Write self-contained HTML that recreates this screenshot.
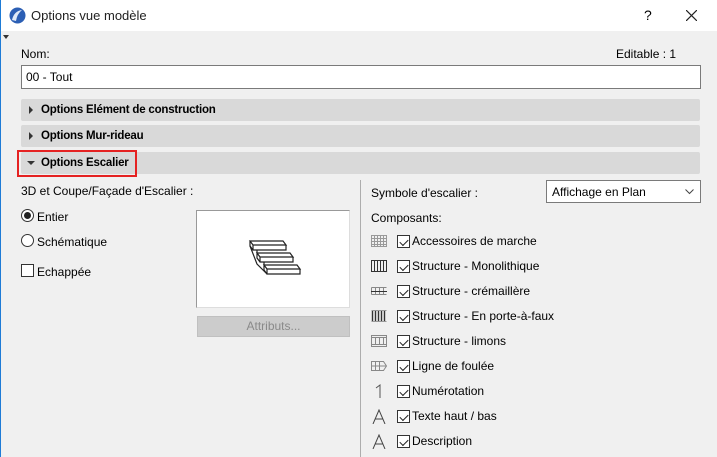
<!DOCTYPE html>
<html><head><meta charset="utf-8"><style>
*{box-sizing:border-box;margin:0;padding:0}
body{width:717px;height:457px;overflow:hidden;background:#f0f0f0;font-family:"Liberation Sans",sans-serif;font-size:12px;color:#000;position:relative}
.a{position:absolute}
.title{left:0;top:0;width:717px;height:31px;background:#fff}
.bar{left:21px;width:679px;height:22px;background:#d9d9d9;border-radius:2px;font-weight:bold;padding-left:20px;line-height:22px;font-size:11.5px;letter-spacing:-0.2px}
.tri{position:absolute;left:8px;top:7px;width:0;height:0;border-top:4px solid transparent;border-bottom:4px solid transparent;border-left:4px solid #333}
.tri.d{left:6px;top:9px;border-left:4px solid transparent;border-right:4px solid transparent;border-top:4px solid #333;border-bottom:0}
.cb{width:13px;height:13px;border:1px solid #333;background:#fff}
.row{left:371px;height:20px}
.row svg{position:absolute;left:0;top:3px}
.row .cb{position:absolute;left:26px;top:3px}
.row span{position:absolute;left:41px;top:2px;white-space:nowrap}
.row .cb::after{content:"";position:absolute;left:2px;top:1px;width:7px;height:4px;border-left:1.3px solid #222;border-bottom:1.3px solid #222;transform:translate(0,2px) rotate(-45deg)}
</style></head><body>
<div class="a" style="left:0;top:0;width:1px;height:457px;background:#1e7bd6;z-index:3"></div>
<div class="a title"></div>
<svg class="a" style="left:9px;top:7px" width="17" height="17" viewBox="0 0 17 17"><circle cx="8.5" cy="8.5" r="8" fill="#2c5fb4"/><path d="M3 13 Q5 4 13 3 Q8 7 7 14Z" fill="#dfe9f7"/></svg>
<div class="a" style="left:31px;top:8px;font-size:13px;color:#222">Options vue modèle</div>
<div class="a" style="left:644px;top:7px;font-size:14px">?</div>
<svg class="a" style="left:686px;top:10px" width="11" height="11"><path d="M0 0L11 11M11 0L0 11" stroke="#222" stroke-width="1.2"/></svg>
<div class="a" style="left:3px;top:35px;border-left:3px solid transparent;border-right:3px solid transparent;border-top:4px solid #333"></div>
<div class="a" style="left:21px;top:47px">Nom:</div>
<div class="a" style="left:616px;top:47px">Editable : 1</div>
<div class="a" style="left:21px;top:65px;width:680px;height:24px;background:#fff;border:1px solid #7a7a7a;padding:4px 4px">00 - Tout</div>
<div class="a bar" style="top:99px"><i class="tri"></i>Options Elément de construction</div>
<div class="a bar" style="top:125px"><i class="tri"></i>Options Mur-rideau</div>
<div class="a bar" style="top:152px"><i class="tri d"></i>Options Escalier</div>
<div class="a" style="left:17px;top:150px;width:120px;height:27px;border:2px solid #e52222"></div>
<div class="a" style="left:21px;top:184px">3D et Coupe/Façade d'Escalier :</div>
<div class="a" style="left:21px;top:209px;width:13px;height:13px;border:1px solid #333;border-radius:50%;background:#fff"><div style="margin:2px;width:7px;height:7px;border-radius:50%;background:#222"></div></div>
<div class="a" style="left:37px;top:210px">Entier</div>
<div class="a" style="left:21px;top:234px;width:13px;height:13px;border:1px solid #333;border-radius:50%;background:#fff"></div>
<div class="a" style="left:37px;top:235px">Schématique</div>
<div class="a cb" style="left:21px;top:264px"></div>
<div class="a" style="left:37px;top:265px">Echappée</div>
<div class="a" style="left:196px;top:210px;width:154px;height:98px;background:#fff;border:1px solid #999;border-right-color:#ddd;border-bottom-color:#ddd"></div>
<svg class="a" style="left:246px;top:238px" width="56" height="44" viewBox="0 0 56 44" fill="none" stroke="#222" stroke-width="1.2">
<path d="M4 3H37L40 7H7Z M7 7V12H40V7 M4 3V8L7 12"/>
<path d="M11 15H44L47 19H14Z M14 19V24H47V19 M11 12V20L14 24"/>
<path d="M18 27H51L54 31H21Z M21 31V36H54V31 M18 24V32L21 36"/>
<path d="M4 8L11 26L21 36"/>
</svg>
<div class="a" style="left:197px;top:316px;width:153px;height:21px;background:#cccccc;border:1px solid #c0c0c0;color:#8a8a8a;text-align:center;line-height:19px">Attributs...</div>
<div class="a" style="left:360px;top:180px;width:1px;height:277px;background:#adadad"></div>
<div class="a" style="left:371px;top:186px">Symbole d'escalier :</div>
<div class="a" style="left:546px;top:180px;width:155px;height:23px;background:#fff;border:1px solid #7a7a7a;padding:4px 5px">Affichage en Plan</div>
<svg class="a" style="left:685px;top:189px" width="9" height="6"><path d="M0.5 0.5L4.5 4.5L8.5 0.5" stroke="#444" fill="none"/></svg>
<div class="a" style="left:371px;top:211px">Composants:</div>

<div class="a row" style="top:232px"><svg width="16" height="12"><path d="M.5 .5h15v11H.5z M3.5 .5v11M6.5 .5v11M9.5 .5v11M12.5 .5v11M.5 3.5h15M.5 6.5h15M.5 9.5h15" stroke="#999" fill="none"/></svg><div class="cb"></div><span>Accessoires de marche</span></div>
<div class="a row" style="top:257px"><svg width="16" height="12"><path d="M.5 .5h15v11H.5z M3.5 .5v11M6.5 .5v11M9.5 .5v11M12.5 .5v11" stroke="#333" fill="none"/></svg><div class="cb"></div><span>Structure - Monolithique</span></div>
<div class="a row" style="top:282px"><svg width="16" height="12"><path d="M.5 2.5h15M.5 9.5h15M.5 2.5v7M4.5 2.5v7M8.5 2.5v7M12.5 2.5v7" stroke="#888" fill="none"/><path d="M0 6.5h16" stroke="#333"/></svg><div class="cb"></div><span>Structure - crémaillère</span></div>
<div class="a row" style="top:307px"><svg width="16" height="12"><path d="M.5 .5h15M.5 11.5h15" stroke="#999"/><path d="M1.5 1v10M4.5 1v10M7.5 1v10M10.5 1v10M13.5 1v10" stroke="#333" stroke-width="1.4"/></svg><div class="cb"></div><span>Structure - En porte-à-faux</span></div>
<div class="a row" style="top:332px"><svg width="16" height="12"><path d="M.5 .5h15v11H.5z M.5 2.5h15M.5 9.5h15M4.5 2.5v7M8.5 2.5v7M12.5 2.5v7" stroke="#888" fill="none"/></svg><div class="cb"></div><span>Structure - limons</span></div>
<div class="a row" style="top:357px"><svg width="16" height="12"><path d="M.5 1.5h12l3 4.5-3 4.5H.5z M4.5 1.5v9M8.5 1.5v9M.5 6h15" stroke="#888" fill="none"/></svg><div class="cb"></div><span>Ligne de foulée</span></div>
<div class="a row" style="top:382px"><svg width="16" height="14" style="top:2px"><path d="M5 4L9 1V14" stroke="#555" fill="none"/></svg><div class="cb"></div><span>Numérotation</span></div>
<div class="a row" style="top:407px"><svg width="16" height="15" style="top:2px"><path d="M2 15L8 1L14 15M4.5 10h7" stroke="#444" fill="none"/></svg><div class="cb"></div><span>Texte haut / bas</span></div>
<div class="a row" style="top:432px"><svg width="16" height="15" style="top:2px"><path d="M2 15L8 1L14 15M4.5 10h7" stroke="#444" fill="none"/></svg><div class="cb"></div><span>Description</span></div>
</body></html>
